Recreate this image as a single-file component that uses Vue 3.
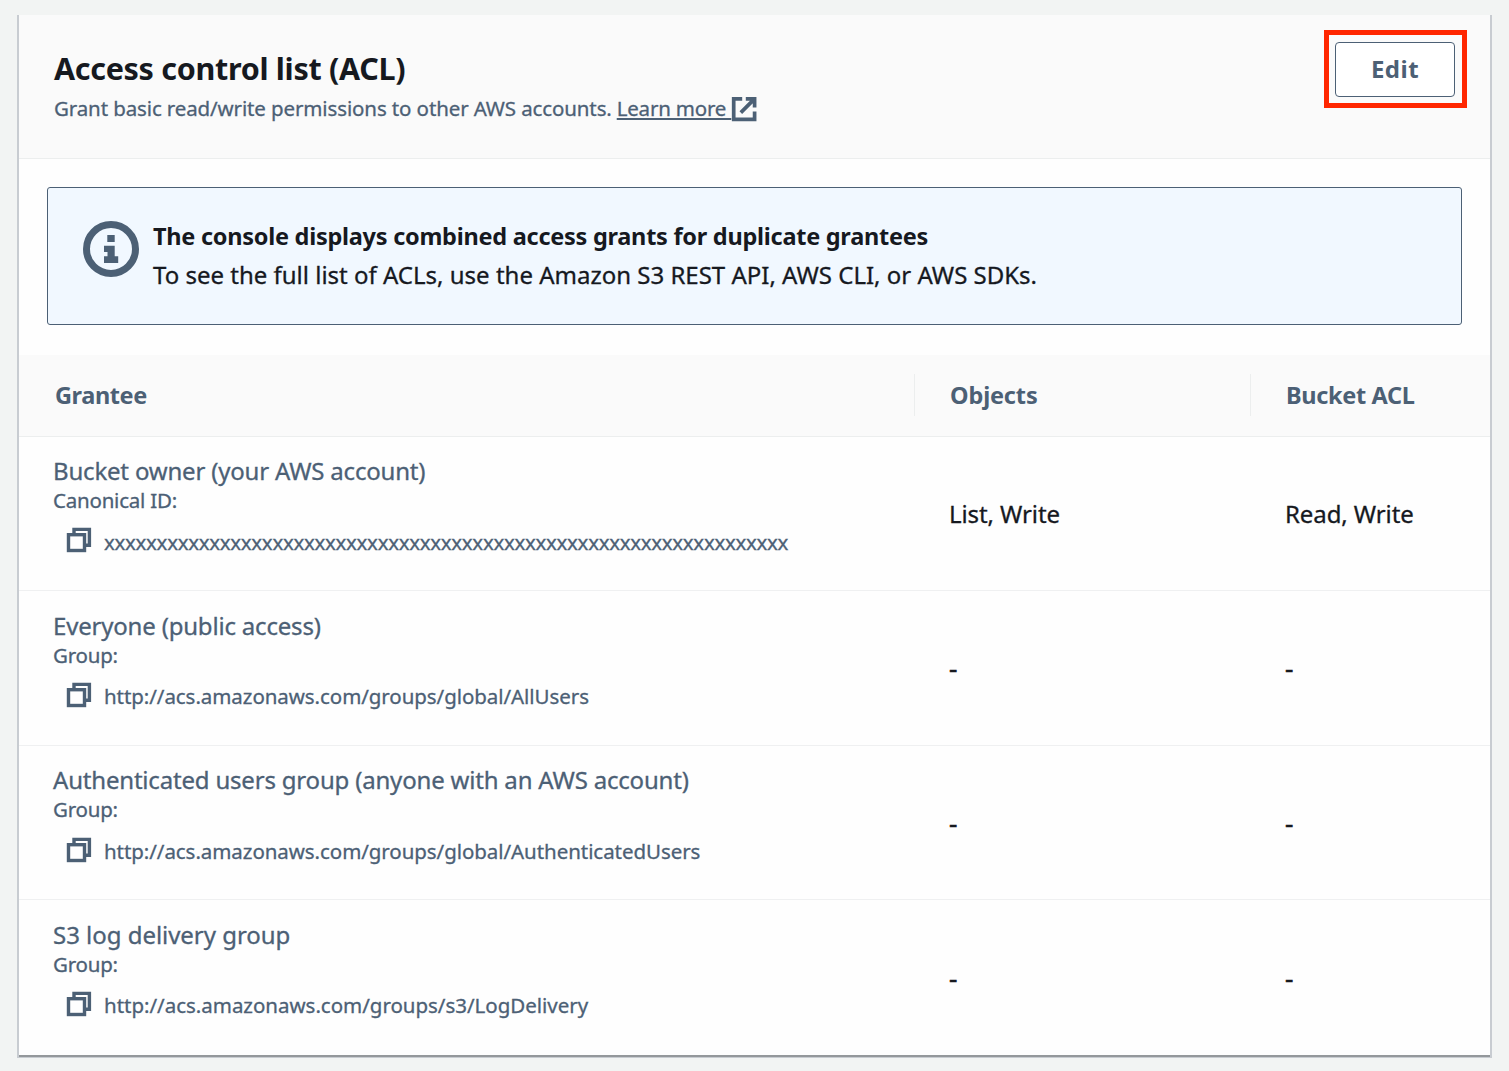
<script setup>
const grantees = [
  { name: 'Bucket owner (your AWS account)', kind: 'Canonical ID:', id: 'x'.repeat(65), objects: 'List, Write', acl: 'Read, Write' },
  { name: 'Everyone (public access)', kind: 'Group:', id: 'http://acs.amazonaws.com/groups/global/AllUsers', objects: '-', acl: '-' },
  { name: 'Authenticated users group (anyone with an AWS account)', kind: 'Group:', id: 'http://acs.amazonaws.com/groups/global/AuthenticatedUsers', objects: '-', acl: '-' },
  { name: 'S3 log delivery group', kind: 'Group:', id: 'http://acs.amazonaws.com/groups/s3/LogDelivery', objects: '-', acl: '-' }
]
</script>

<template>
  <main class="page">
    <section class="card">
      <header class="card-header">
        <div class="heading">
          <h2>Access control list (ACL)</h2>
          <p class="description">
            <span>Grant basic read/write permissions to other AWS accounts.</span>
            <a class="learn-more"><span class="link-text">Learn more&nbsp;</span><svg class="external" viewBox="0 0 26 26" aria-hidden="true">
              <path d="M11.2 2.8H2.7V23.4H23.6V15.4M14.8 2.8H23.6V11.4M9.8 16.6L23 3.4" />
            </svg></a>
          </p>
        </div>
        <div class="highlight">
          <button class="edit">Edit</button>
        </div>
      </header>

      <div class="alert">
        <svg class="info" viewBox="0 0 56 56" aria-hidden="true">
          <circle cx="28" cy="28" r="24.5" />
          <path d="M24.3 14H31.7V21H24.3ZM21 24.7H31.7V35.2H35.2V42H21V35.2H24.5V31H21Z" />
        </svg>
        <div>
          <p class="alert-title">The console displays combined access grants for duplicate grantees</p>
          <p class="alert-text">To see the full list of ACLs, use the Amazon S3 REST API, AWS CLI, or AWS SDKs.</p>
        </div>
      </div>

      <div class="table">
        <div class="columns table-head">
          <div class="th first">Grantee</div>
          <div class="th">Objects</div>
          <div class="th acl">Bucket ACL</div>
        </div>
        <div class="rows">
          <div v-for="g in grantees" :key="g.name" class="columns row">
            <div class="grantee">
              <div class="name">{{ g.name }}</div>
              <div class="kind">{{ g.kind }}</div>
              <div class="id-line">
                <svg class="copy" viewBox="0 0 26 26" aria-hidden="true">
                  <path d="M8 6V2.4H23.4V18.3H20" />
                  <rect x="2.5" y="7.7" width="16" height="15.8" />
                </svg>
                <span class="id">{{ g.id }}</span>
              </div>
            </div>
            <div class="value" :class="{ none: g.objects === '-' }">{{ g.objects }}</div>
            <div class="value" :class="{ none: g.acl === '-' }">{{ g.acl }}</div>
          </div>
        </div>
      </div>
    </section>
  </main>
</template>

<style>
body {
  background: #f2f4f3;
}
</style>

<style scoped>
.page {
  box-sizing: border-box;
  height: 1071px;
  padding: 15px 17px 0;
  background: #f2f4f3;
  color: #4c6075;
  font-family: "Noto Sans", "Open Sans", sans-serif;
  white-space: nowrap;
}
h2,
p {
  margin: 0;
}
.card {
  box-sizing: border-box;
  width: 1475px;
  height: 1042px;
  background: #fefefe;
  border: solid #c8ccd1;
  border-width: 0 2px;
  box-shadow: inset 0 -2px #94989b, 0 1px #c8ccd1;
}
.card-header {
  box-sizing: border-box;
  height: 144px;
  display: flex;
  justify-content: space-between;
  align-items: flex-start;
  padding: 0 23px 0 35px;
  background: #fafafa;
  border-bottom: 1px solid #eceeee;
}
.heading {
  padding-top: 35px;
}
h2 {
  color: #16191f;
  font-size: 30.5px;
  line-height: 36px;
  letter-spacing: -0.3px;
}
.description {
  display: flex;
  margin-top: 7px;
  font-size: 20.5px;
  line-height: 30px;
  letter-spacing: -0.12px;
}
.learn-more {
  display: flex;
  margin-left: 5px;
  letter-spacing: -0.2px;
}
.link-text {
  text-decoration: underline;
  text-decoration-thickness: 2px;
  text-underline-offset: 2px;
  text-decoration-skip-ink: none;
}
.external {
  width: 26px;
  height: 26px;
  margin-top: 3px;
  fill: none;
  stroke: currentColor;
  stroke-width: 3.7;
}
.description,
.alert-text,
.name,
.kind,
.id,
.value {
  -webkit-text-stroke: 0.3px currentColor;
}
.highlight {
  box-sizing: border-box;
  width: 143px;
  height: 78px;
  margin-top: 15px;
  padding: 7px 4px 7px 6px;
  border: 5px solid #ff2600;
}
.edit {
  display: block;
  box-sizing: border-box;
  width: 120px;
  height: 55px;
  padding: 0 0 2px;
  background: #fff;
  border: 1px solid #4c6075;
  border-radius: 4px;
  color: inherit;
  font: 700 24px/50px "Noto Sans", sans-serif;
  letter-spacing: 0.5px;
}
.alert {
  box-sizing: border-box;
  display: flex;
  height: 138px;
  margin: 28px 28px 30px;
  padding: 29px 35px;
  background: #f1f8ff;
  border: 1px solid #4c6075;
  border-radius: 3px;
  color: #16191f;
}
.info {
  width: 56px;
  height: 56px;
  margin: 4px 14px 0 0;
  color: #4c6075;
  fill: currentColor;
}
.info circle {
  fill: none;
  stroke: currentColor;
  stroke-width: 7;
}
.alert-title {
  font-size: 23.5px;
  font-weight: 700;
  line-height: 38px;
  letter-spacing: -0.26px;
}
.alert-text {
  margin-top: 1px;
  font-size: 24px;
  line-height: 38px;
}
.columns {
  display: grid;
  grid-template-columns: 895px 336px 1fr;
}
.table-head {
  box-sizing: border-box;
  height: 82px;
  align-items: center;
  padding-bottom: 2px;
  background: #fafafa;
  border-bottom: 1px solid #eceeee;
}
.th {
  padding-left: 35px;
  border-left: 1px solid #eceeee;
  font-size: 23.5px;
  font-weight: 700;
  line-height: 42px;
  letter-spacing: -0.15px;
}
.th.first {
  border-left-color: transparent;
  letter-spacing: -0.4px;
}
.th.acl {
  letter-spacing: -0.35px;
}
.row {
  box-sizing: border-box;
  height: 155px;
  border-bottom: 1px solid #eff0f1;
}
.row:nth-child(1),
.row:nth-child(3) {
  height: 154px;
}
.row:last-child {
  border-bottom: 0;
}
.grantee {
  padding: 20px 0 0 34px;
}
.name {
  font-size: 24px;
  line-height: 30px;
  letter-spacing: -0.19px;
}
.row:last-child .name {
  letter-spacing: -0.03px;
}
.kind {
  font-size: 20.5px;
  line-height: 28px;
  letter-spacing: -0.22px;
}
.id-line {
  display: flex;
  margin-top: 13px;
  padding-left: 13px;
}
.row:nth-child(odd) .grantee {
  padding-top: 19px;
}
.row:nth-child(odd) .id-line {
  margin-top: 14px;
}
.copy {
  width: 26px;
  height: 26px;
  margin: -0.5px 12px 0 0;
  fill: none;
  stroke: currentColor;
  stroke-width: 3.4;
}
.row:first-child .copy {
  margin-top: -1px;
}
.id {
  font-size: 20.5px;
  line-height: 28px;
  letter-spacing: -0.06px;
}
.row:last-child .id {
  letter-spacing: -0.02px;
}
.row:first-child .id {
  letter-spacing: -0.32px;
}
.value {
  align-self: center;
  padding-left: 35px;
  color: #16191f;
  font-size: 24px;
  line-height: 30px;
  letter-spacing: -0.1px;
}
.value.none {
  font-size: 26px;
  -webkit-text-stroke-width: 0.6px;
}
</style>
